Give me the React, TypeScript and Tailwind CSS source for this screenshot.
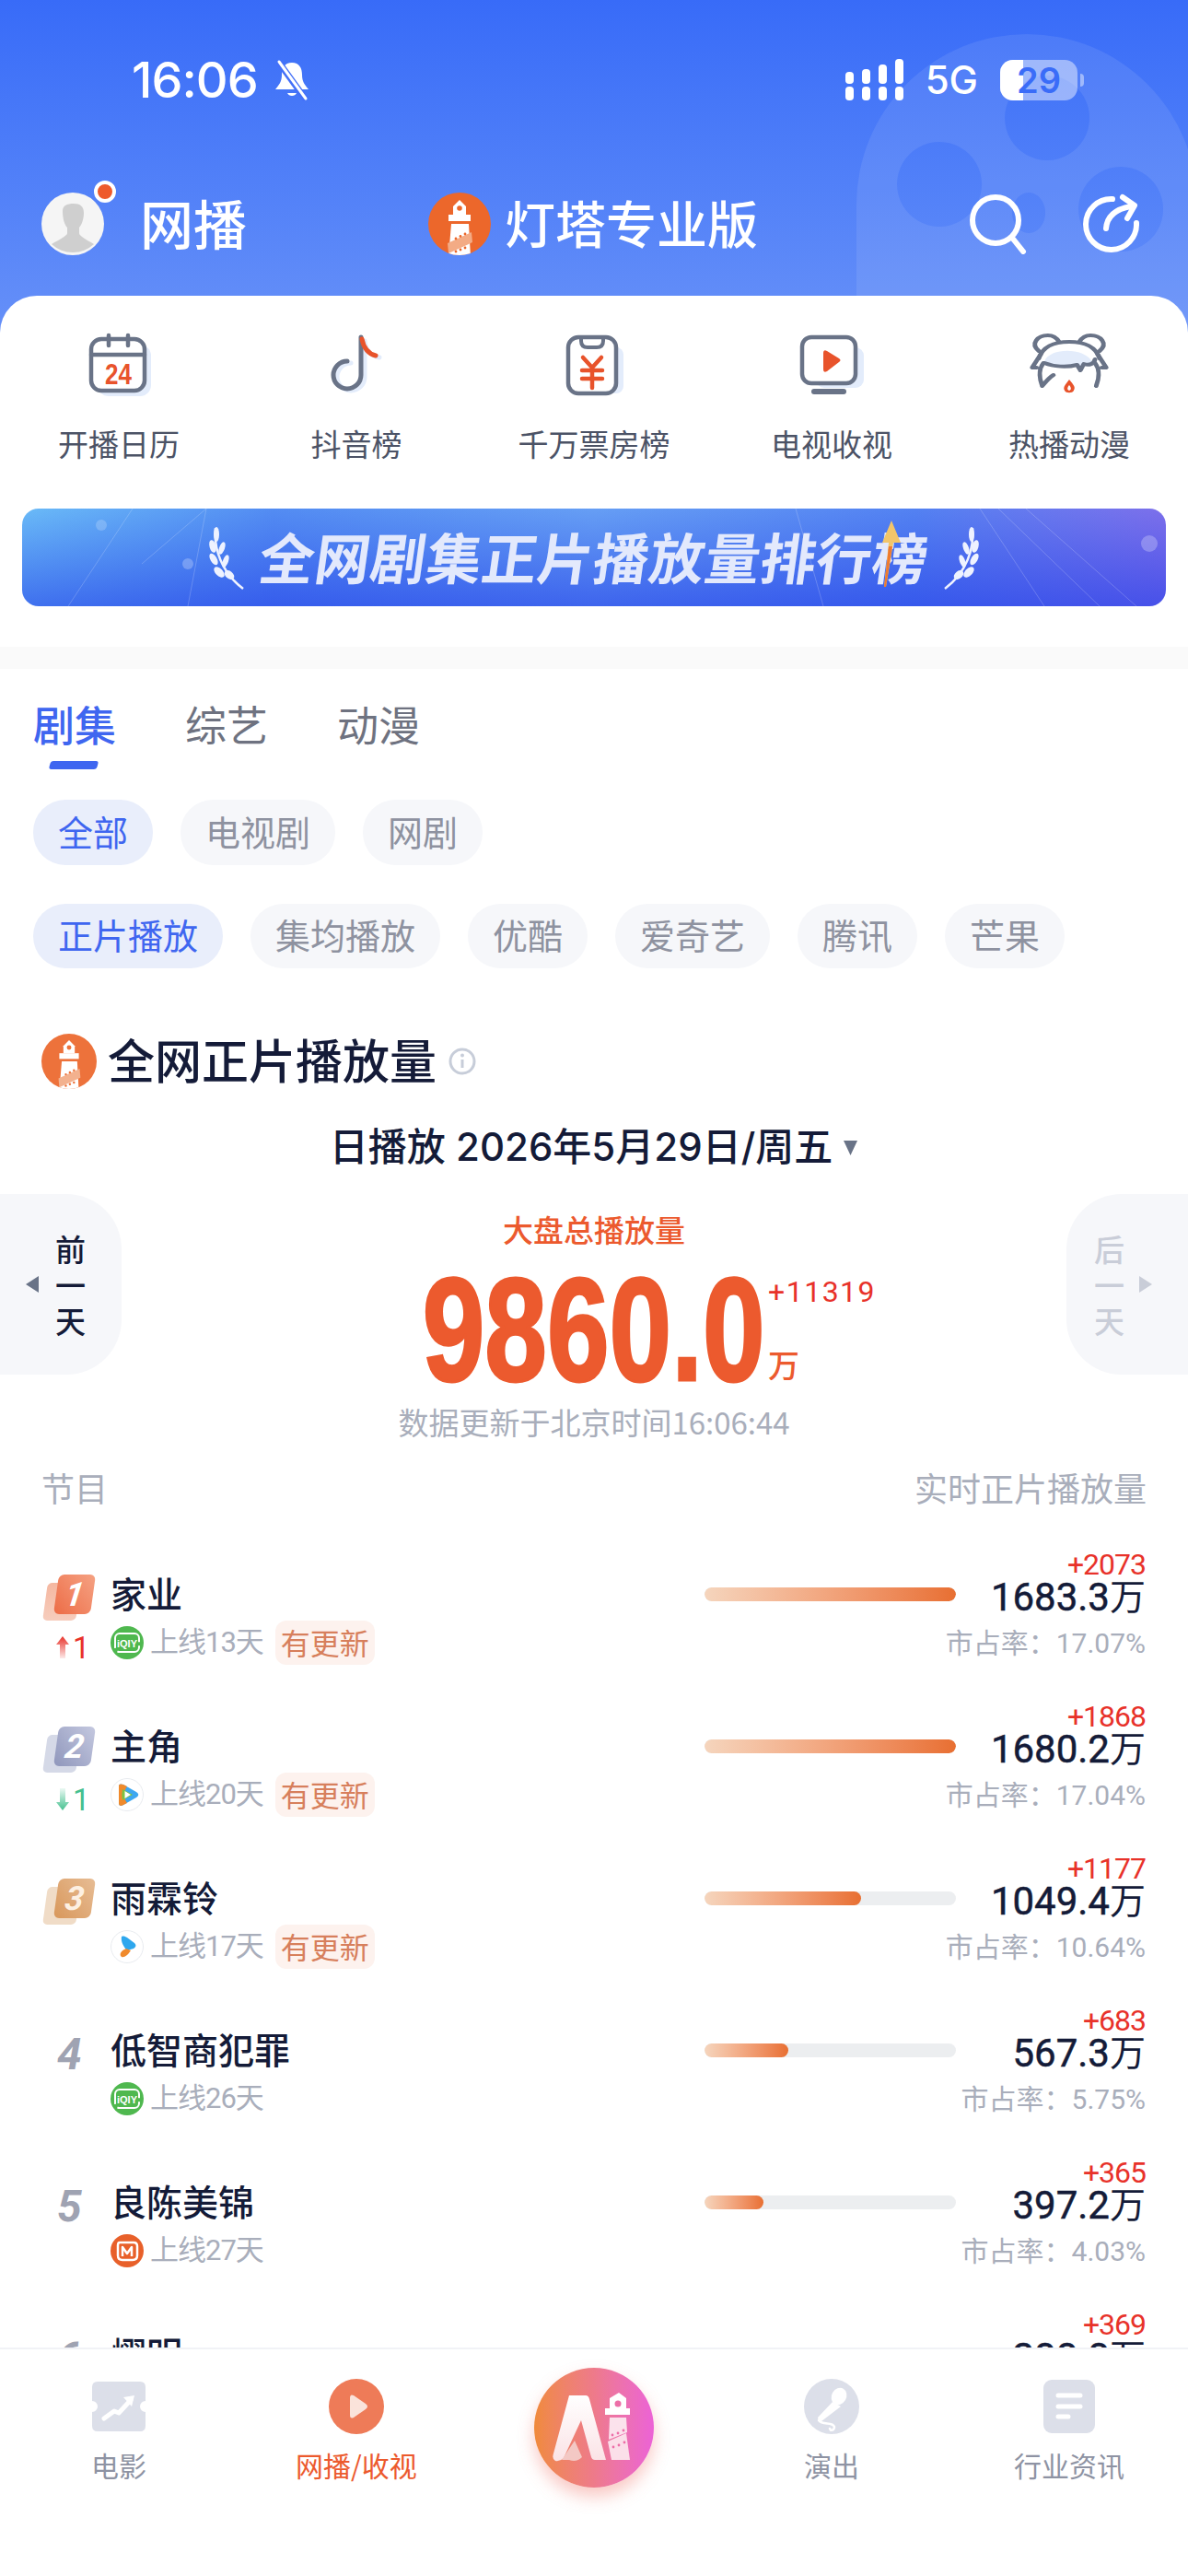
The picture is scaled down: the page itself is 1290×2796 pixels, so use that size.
import React from 'react';

const tabs = ['剧集', '综艺', '动漫'];
const chipsA = ['全部', '电视剧', '网剧'];
const chipsB = ['正片播放', '集均播放', '优酷', '爱奇艺', '腾讯', '芒果'];

type Row = {
  rank: number;
  change?: 'up' | 'down';
  title: string;
  platform: 'iqiyi' | 'tencent' | 'youku' | 'mango';
  online: string;
  updated?: boolean;
  bar: number;
  delta: string;
  value: string;
  share: string;
};

const rows: Row[] = [
  { rank: 1, change: 'up', title: '家业', platform: 'iqiyi', online: '上线13天', updated: true, bar: 100, delta: '+2073', value: '1683.3', share: '17.07%' },
  { rank: 2, change: 'down', title: '主角', platform: 'tencent', online: '上线20天', updated: true, bar: 100, delta: '+1868', value: '1680.2', share: '17.04%' },
  { rank: 3, title: '雨霖铃', platform: 'youku', online: '上线17天', updated: true, bar: 62.3, delta: '+1177', value: '1049.4', share: '10.64%' },
  { rank: 4, title: '低智商犯罪', platform: 'iqiyi', online: '上线26天', bar: 33.5, delta: '+683', value: '567.3', share: '5.75%' },
  { rank: 5, title: '良陈美锦', platform: 'mango', online: '上线27天', bar: 23.3, delta: '+365', value: '397.2', share: '4.03%' },
  { rank: 6, title: '熠明', platform: 'iqiyi', online: '上线27天', bar: 20, delta: '+369', value: '288.8', share: '2.93%' },
];

const Lighthouse = ({ id, size, opacity = 1 }: { id: string; size: number; opacity?: number }) => (
  <svg width={size} height={size} viewBox="0 0 68 68" className="shrink-0" style={{ opacity }}>
    <defs>
      <clipPath id={id}>
        <circle cx="34" cy="34" r="34" />
      </clipPath>
    </defs>
    <circle cx="34" cy="34" r="34" fill="#ec672b" />
    <g clipPath={`url(#${id})`}>
      <path d="M27 24V15L34 8L41 15V24Z" fill="#fff" />
      <circle cx="34" cy="17" r="2.8" fill="#ec672b" />
      <rect x="22" y="24" width="24" height="7" fill="#fff" />
      <path d="M25 34H44L46 70H22Z" fill="#fff" />
      <path d="M21 55L47 43L48 54L22 66Z" fill="#f3ab85" />
      <g fill="#ec672b">
        <circle cx="30" cy="50" r="1.4" />
        <circle cx="35" cy="47.5" r="1.4" />
        <circle cx="40" cy="45" r="1.4" />
        <circle cx="30" cy="64" r="1.4" />
        <circle cx="35" cy="62" r="1.4" />
        <circle cx="40" cy="60" r="1.4" />
      </g>
    </g>
  </svg>
);

const Reel = () => (
  <svg width="380" height="360" viewBox="0 0 380 360" className="absolute left-[930px] top-[37px]">
    <path
      fillRule="evenodd"
      fill="#fff"
      fillOpacity="0.085"
      d="M0 185A185 185 0 1 1 370 185V360H0ZM207 45a46 46 0 1 0 .1 0ZM90 117a46 46 0 1 0 .1 0ZM287 144a46 46 0 1 0 .1 0ZM187 172a18 22 0 1 0 .1 0Z"
    />
  </svg>
);

const StatusBar = () => (
  <div className="relative flex h-[54px] items-center mt-[60px]">
    <span className="ml-[143px] text-[54px] font-medium leading-none text-white [font-family:Inter,sans-serif] tracking-[-1px]">16:06</span>
    <svg width="46" height="46" viewBox="0 0 46 46" className="ml-[14px]" fill="none">
      <path d="M23 4C15 4 12 10 12 17C12 25 9 28 5 33H41C37 28 34 25 34 17C34 10 31 4 23 4Z" fill="#fff" />
      <path d="M18 37a5.5 5 0 0 0 10 0Z" fill="#fff" />
      <path d="M9 4L38 44" stroke="#4470f8" strokeWidth="7" />
      <path d="M9 3L38 43" stroke="#fff" strokeWidth="3" strokeLinecap="round" />
    </svg>
    <div className="ml-auto mr-[113px] flex items-center">
      <svg width="66" height="46" viewBox="0 0 66 46" fill="#fff">
        <rect x="1" y="30" width="9" height="15" rx="4" />
        <rect x="1" y="14" width="9" height="13" rx="4" />
        <rect x="19" y="30" width="9" height="15" rx="4" />
        <rect x="19" y="11" width="9" height="16" rx="4" />
        <rect x="37" y="30" width="9" height="15" rx="4" />
        <rect x="37" y="6" width="9" height="21" rx="4" />
        <rect x="55" y="30" width="9" height="15" rx="4" />
        <rect x="55" y="0" width="9" height="27" rx="4" />
      </svg>
      <span className="ml-[22px] text-[42px] font-medium leading-none text-white [font-family:Inter,sans-serif]">5G</span>
      <div className="relative ml-[24px] flex h-[44px] w-[84px] items-center justify-center overflow-hidden rounded-[14px] bg-white/45">
        <div className="absolute inset-y-0 left-0 w-[25px] bg-white" />
        <span className="relative text-[38px] font-semibold leading-none text-[#3a6cf8] [font-family:Inter,sans-serif]">29</span>
      </div>
      <span className="ml-[3px] h-[14px] w-[4px] rounded-r-full bg-white/45" />
    </div>
  </div>
);

const TopBar = () => (
  <div className="relative mt-[89px] flex h-[80px] items-center">
    <div className="flex w-[465px] items-center pl-[45px]">
      <div className="relative">
        <svg width="68" height="68" viewBox="0 0 68 68" className="block">
          <circle cx="34" cy="34" r="34" fill="#f5f5f5" />
          <path d="M23 20C23 14 28 12 35 12C42 12 46 15 46 22C46 30 43 36 41 38V44C41 47 47 50 57 56A34 34 0 0 1 11 56C21 50 28 47 28 44V38C25 35 23 28 23 20Z" fill="#cfcfcf" />
          <path d="M28 42V48H41V42Z" fill="#cfcfcf" />
        </svg>
        <span className="absolute left-[57px] top-[-13px] h-[24px] w-[24px] rounded-full border-[4px] border-white bg-[#ee5a2c]" />
      </div>
      <span className="ml-[39px] pb-[5px] text-[58px] font-medium leading-none text-white">网播</span>
    </div>
    <Lighthouse id="top-logo" size={68} />
    <span className="ml-[15px] pb-[5px] text-[55px] font-medium leading-none text-white">灯塔专业版</span>
    <div className="ml-auto mr-[50px] flex items-center gap-[60px]">
      <svg width="64" height="66" viewBox="0 0 64 66" fill="none" stroke="#fff" strokeWidth="6" strokeLinecap="round">
        <circle cx="29" cy="29" r="25" />
        <path d="M47 48L59 63" />
      </svg>
      <svg width="64" height="66" viewBox="0 0 64 66" fill="none" stroke="#fff" strokeWidth="6" strokeLinecap="round" strokeLinejoin="round">
        <path d="M58 32A27.5 27.5 0 1 1 32 6" />
        <path d="M25 38C26 25 35 17 52 14" />
        <path d="M43 4L56 13L48 27" />
      </svg>
    </div>
  </div>
);

const shadow = '#e3ecfb';
const line = '#697387';
const hot = '#e8532b';

const CalendarIcon = () => (
  <svg width="78" height="78" viewBox="0 0 78 78" fill="none">
    <rect x="16" y="17" width="58" height="56" rx="12" fill={shadow} />
    <rect x="9" y="11" width="58" height="56" rx="11" fill="#fff" stroke={line} strokeWidth="4.5" />
    <path d="M9 28H67M28 7V18M49 7V18" stroke={line} strokeWidth="4.5" strokeLinecap="round" />
    <text x="24" y="60" textLength="29" lengthAdjust="spacingAndGlyphs" fontSize="31" fontWeight="800" fill={hot} fontFamily="Liberation Sans, sans-serif">24</text>
  </svg>
);

const NoteIcon = () => (
  <svg width="78" height="78" viewBox="0 0 78 78" fill="none" strokeLinecap="round">
    <path d="M48 13V52A15 15 0 1 1 33 37" stroke={shadow} strokeWidth="5" />
    <path d="M64 31C56 30 50 24 48 15" stroke={shadow} strokeWidth="5" />
    <path d="M44 9V50A15 15 0 1 1 29 35" stroke={line} strokeWidth="5" />
    <path d="M45 11C47 21 52 27 60 29" stroke={hot} strokeWidth="5" />
  </svg>
);

const TicketIcon = () => (
  <svg width="78" height="78" viewBox="0 0 78 78" fill="none">
    <rect x="24" y="20" width="47" height="50" rx="8" fill={shadow} />
    <rect x="11" y="9" width="52" height="61" rx="11" fill="#fff" stroke={line} strokeWidth="4.5" />
    <path d="M25 9V13Q25 20 32 20H42Q49 20 49 13V9" stroke={line} strokeWidth="4" />
    <path d="M27 31L37 42L47 31M26 45H48M26 54H48M37 42V64" stroke={hot} strokeWidth="4.5" strokeLinecap="round" strokeLinejoin="round" />
  </svg>
);

const TvIcon = () => (
  <svg width="78" height="78" viewBox="0 0 78 78" fill="none">
    <rect x="22" y="20" width="52" height="44" rx="9" fill={shadow} />
    <rect x="7" y="9" width="58" height="50" rx="10" fill="#fff" stroke={line} strokeWidth="4.5" />
    <path d="M20 68H52" stroke={line} strokeWidth="6" strokeLinecap="round" />
    <path d="M30 26Q30 22 34 24L47 32Q50 34 47 36L34 46Q30 48 30 44Z" fill={hot} />
  </svg>
);

const AnimeIcon = () => (
  <svg width="78" height="78" viewBox="0 0 78 78" fill="none" className="overflow-visible" stroke={line} strokeWidth="4" strokeLinecap="round" strokeLinejoin="round">
    <g transform="translate(39 0) scale(1.22 1) translate(-39 0)">
      <path d="M17 35C22 20 52 20 59 35C58 40 56 42 52 39L49 44L45 39C38 41 28 40 21 38Z" fill={shadow} stroke="none" />
      <path d="M12 24C4 16 11 7 20 7C25 7 28 10 30 14M66 24C74 16 67 7 58 7C53 7 50 10 48 14" />
      <path d="M12 32C15 20 25 14 39 14C53 14 63 20 66 32" />
      <path d="M17 37C25 41 37 42 46 39L49 45L52 38C57 40 61 38 62 33" />
      <path d="M14 27L6 42L10 42M16 37C11 45 13 56 15 62C19 56 22 52 25 50" />
      <path d="M64 27L72 42L68 42M62 37C67 45 65 56 63 62" />
      <path d="M39 55C43 61 45 63 43 67C42 70 36 70 35 67C33 63 36 60 39 55Z" fill={hot} stroke="none" />
      <path d="M39 61C41 64 41 66 39 67C37 66 37 64 39 61Z" fill="#fff" stroke="none" />
    </g>
  </svg>
);

const quickItems = [
  { label: '开播日历', icon: <CalendarIcon /> },
  { label: '抖音榜', icon: <NoteIcon /> },
  { label: '千万票房榜', icon: <TicketIcon /> },
  { label: '电视收视', icon: <TvIcon /> },
  { label: '热播动漫', icon: <AnimeIcon /> },
];

const Laurel = ({ flip }: { flip?: boolean }) => (
  <svg width="46" height="72" viewBox="0 0 46 72" fill="#eef2ff" className={flip ? '-scale-x-100' : ''}>
    <path d="M10 4C8 26 16 52 40 70" fill="none" stroke="#eef2ff" strokeWidth="2.5" />
    <ellipse cx="11" cy="11" rx="3" ry="8" />
    <ellipse cx="7" cy="24" rx="3.5" ry="7" transform="rotate(-15 7 24)" />
    <ellipse cx="17" cy="26" rx="3" ry="7" transform="rotate(20 17 26)" />
    <ellipse cx="8" cy="38" rx="3.5" ry="7" transform="rotate(-30 8 38)" />
    <ellipse cx="21" cy="40" rx="3" ry="7" transform="rotate(20 21 40)" />
    <ellipse cx="14" cy="52" rx="4" ry="7" transform="rotate(-45 14 52)" />
    <ellipse cx="25" cy="55" rx="4" ry="6" transform="rotate(-50 25 55)" />
  </svg>
);

const Banner = () => (
  <div className="relative mx-[24px] mt-[49px] flex h-[106px] items-center justify-center gap-[12px] overflow-hidden rounded-[18px] bg-[linear-gradient(180deg,rgba(130,180,250,0.3),rgba(50,80,235,0.7)),linear-gradient(90deg,#5fbdf6_0%,#3f7bef_22%,#5a95f2_50%,#3f6cee_78%,#7a52e4_100%)]">
    <svg width="1242" height="106" viewBox="0 0 1242 106" className="absolute inset-0" fill="none" stroke="#fff" strokeOpacity="0.2">
      <path d="M50 106L120 0M180 106L200 0M130 60L200 0M1040 0L1110 106M1060 0L1170 106M1090 0L1210 106M840 0L870 106" />
      <circle cx="180" cy="60" r="6" fill="#fff" fillOpacity="0.25" stroke="none" />
      <circle cx="1224" cy="38" r="9" fill="#fff" fillOpacity="0.25" stroke="none" />
      <circle cx="86" cy="18" r="6" fill="#fff" fillOpacity="0.2" stroke="none" />
    </svg>
    <Laurel />
    <span className="relative inline-block -skew-x-[8deg] pb-[4px] text-[60px] font-bold leading-none tracking-[0.5px] text-[#e3e9fc]">全网剧集正片播放量排行榜</span>
    <Laurel flip />
    <svg width="24" height="72" viewBox="0 0 24 72" className="absolute left-[932px] top-[13px]">
      <path d="M12 0L22 24H14L6 72H4L9 24H2Z" fill="#f2c56a" />
      <path d="M9 28H13L6 72H4Z" fill="#ee7a30" />
    </svg>
  </div>
);

const Chip = ({ label, active, h }: { label: string; active?: boolean; h: string }) => (
  <span className={`flex items-center rounded-[35px] px-[27px] pb-[4px] text-[38px] leading-none ${h} ${active ? 'bg-[#e9eefb] text-[#3f66f0]' : 'bg-[#f6f7fa] text-[#8e92a0]'}`}>{label}</span>
);

const DayButton = ({ next }: { next?: boolean }) => (
  <div className={`flex h-[196px] w-[132px] shrink-0 items-center bg-[#f6f7fa] ${next ? 'rounded-l-[60px] pl-[30px]' : 'rounded-r-[60px] pl-[27px]'}`}>
    {!next && (
      <svg width="16" height="18" viewBox="0 0 16 18"><path d="M15 0V18L1 9Z" fill="#697387" /></svg>
    )}
    <div className={`flex flex-col gap-[6px] text-[33px] font-medium leading-none ${next ? 'text-[#c9cdd8]' : 'ml-[17px] text-[#141b38]'}`}>
      <span>{next ? '后' : '前'}</span>
      <span>一</span>
      <span>天</span>
    </div>
    {next && (
      <svg width="16" height="18" viewBox="0 0 16 18" className="ml-[15px]"><path d="M1 0V18L15 9Z" fill="#c9cdd8" /></svg>
    )}
  </div>
);

const badgeStyles: Record<number, { front: string; back: string; text: string }> = {
  1: { front: 'bg-linear-to-tr from-[#ec6b45] to-[#f5a283]', back: 'bg-linear-to-b from-[#f5b7a0] to-[#f6cdbd]', text: 'text-white' },
  2: { front: 'bg-linear-to-tr from-[#8f96bb] to-[#c5c9e0]', back: 'bg-[#d5d9e7]', text: 'text-white' },
  3: { front: 'bg-linear-to-tr from-[#d8975a] to-[#e7bd95]', back: 'bg-[#f0dcc7]', text: 'text-[#fdf0e2]' },
};

const RankBadge = ({ rank }: { rank: number }) => {
  const s = badgeStyles[rank];
  if (!s) {
    return <span className="ml-[16px] mt-[2px] block text-[48px] font-bold italic leading-none text-[#9fa3b2] [font-family:Roboto,sans-serif]">{rank}</span>;
  }
  return (
    <div className="relative h-[50px] w-[58px]">
      <div className={`absolute bottom-0 left-[3px] h-[41px] w-[36px] -skew-x-[8deg] rounded-[5px] ${s.back}`} />
      <div className={`absolute right-[3px] top-0 flex h-[43px] w-[40px] -skew-x-[8deg] items-center justify-center rounded-[6px] ${s.front}`}>
        <span className={`text-[36px] font-bold italic leading-none [font-family:Roboto,sans-serif] ${s.text}`}>{rank}</span>
      </div>
    </div>
  );
};

const ChangeMark = ({ dir, id }: { dir: 'up' | 'down'; id: string }) => {
  const color = dir === 'up' ? '#e8322a' : '#45c08f';
  return (
    <div className="ml-[14px] mt-[17px] flex h-[24px] items-center">
      <svg width="16" height="24" viewBox="0 0 16 24">
        <defs>
          <linearGradient id={id} x1="0" y1={dir === 'up' ? 0 : 1} x2="0" y2={dir === 'up' ? 1 : 0}>
            <stop offset="0" stopColor={color} />
            <stop offset="1" stopColor={color} stopOpacity="0.1" />
          </linearGradient>
        </defs>
        <path d={dir === 'up' ? 'M8 0L15 9H11V24H5V9H1Z' : 'M8 24L15 15H11V0H5V15H1Z'} fill={`url(#${id})`} />
      </svg>
      <span className="ml-[3px] text-[33px] leading-none [font-family:Roboto,sans-serif]" style={{ color }}>1</span>
    </div>
  );
};

const PlatformIcon = ({ kind }: { kind: Row['platform'] }) => {
  if (kind === 'iqiyi') {
    return (
      <svg width="36" height="36" viewBox="0 0 36 36" className="shrink-0">
        <circle cx="18" cy="18" r="18" fill="#4fb84f" />
        <rect x="5" y="8" width="26" height="20" rx="5" fill="none" stroke="#fff" strokeWidth="2" strokeDasharray="28 4" />
        <text x="18" y="23" textAnchor="middle" fontSize="11" fontWeight="700" fill="#fff" fontFamily="Liberation Sans, sans-serif">iQIY</text>
      </svg>
    );
  }
  if (kind === 'tencent') {
    return (
      <svg width="36" height="36" viewBox="0 0 36 36" className="shrink-0">
        <circle cx="18" cy="18" r="17.5" fill="#fff" stroke="#e8ebef" />
        <path d="M9 9C9 6 11 6 14 7L28 15C31 17 31 19 28 21L14 29C11 31 9 30 9 27Z" fill="#3da7f0" />
        <path d="M9 9C9 6 11 6 14 7L18 9C14 14 14 22 18 27L14 29C11 31 9 30 9 27Z" fill="#f08a2c" />
        <path d="M13 12L24 18L13 24Q11.5 18 13 12Z" fill="#7cc242" />
        <path d="M15.5 14L22 18L15.5 22Z" fill="#fff" />
      </svg>
    );
  }
  if (kind === 'youku') {
    return (
      <svg width="36" height="36" viewBox="0 0 36 36" className="shrink-0">
        <circle cx="18" cy="18" r="17.5" fill="#fff" stroke="#e8ebef" />
        <path d="M12 7C14 6 16 7 18 8L26 14C28 16 28 18 25 20L18 22C14 18 11 12 12 7Z" fill="#2ea7ee" />
        <path d="M17 20L22 22C19 27 15 30 12 29C9 27 11 22 17 20Z" fill="#f08a2c" />
      </svg>
    );
  }
  return (
    <svg width="36" height="36" viewBox="0 0 36 36" className="shrink-0">
      <circle cx="18" cy="18" r="18" fill="#e8602a" />
      <path d="M10 9H25Q29 9 29 13V23Q29 28 24 28H13Q8 28 8 23V12Q8 9 10 9Z" fill="none" stroke="#fff" strokeWidth="2.5" />
      <path d="M13 24V14L18 21L23 14V24" fill="none" stroke="#fff" strokeWidth="2.5" strokeLinejoin="round" />
    </svg>
  );
};

const ListRow = ({ row }: { row: Row }) => (
  <div className="flex h-[165px]">
    <div className="flex w-[765px] pt-[31px]">
      <div className="ml-[46px] w-[74px] shrink-0">
        <RankBadge rank={row.rank} />
        {row.change && <ChangeMark dir={row.change} id={`chg-${row.rank}`} />}
      </div>
      <div className="min-w-0 -mt-[2px]">
        <div className="flex h-[46px] items-center pb-[3px] text-[39px] font-medium leading-none text-[#141b38]">{row.title}</div>
        <div className="mt-[6px] flex h-[48px] items-center">
          <PlatformIcon kind={row.platform} />
          <span className="ml-[7px] whitespace-nowrap pb-[2px] text-[31px] leading-none tracking-[-1px] text-[#a9aebb] [font-family:Roboto,'Noto_Sans_CJK_SC',sans-serif]">{row.online}</span>
          {row.updated && (
            <span className="ml-[13px] flex h-[48px] items-center rounded-[12px] bg-[#fdf2ee] px-[6px] pb-[2px] text-[32px] leading-none text-[#d77f5c]">有更新</span>
          )}
        </div>
      </div>
    </div>
    <div className="mt-[45px] h-[15px] w-[273px] overflow-hidden rounded-full bg-[#eceef0]">
      <div className="h-full rounded-full bg-linear-to-r from-[#f5d5bd] to-[#e86f31]" style={{ width: `${row.bar}%` }} />
    </div>
    <div className="flex min-w-0 flex-1 flex-col items-end whitespace-nowrap pr-[46px]">
      <span className="mt-[2px] flex h-[36px] items-center text-[32px] leading-none tracking-[-1px] text-[#e8322a] [font-family:Roboto,sans-serif]">{row.delta}</span>
      <span className="flex h-[36px] items-center text-[42px] font-normal leading-none text-[#141b38] [-webkit-text-stroke:0.5px_#141b38] [font-family:Roboto,'Noto_Sans_CJK_SC',sans-serif]">
        {row.value}<span className="text-[39px] [-webkit-text-stroke:0px]">万</span>
      </span>
      <span className="mt-[13px] flex h-[40px] items-center pb-[2px] text-[30px] leading-none text-[#a9aebb] [font-family:Roboto,'Noto_Sans_CJK_SC',sans-serif]">市占率：{row.share}</span>
    </div>
  </div>
);

const TicketNav = () => (
  <svg width="60" height="60" viewBox="0 0 60 60">
    <path d="M7 3H53Q59 3 59 9V24A6 6 0 0 0 59 36V51Q59 57 53 57H7Q1 57 1 51V36A6 6 0 0 0 1 24V9Q1 3 7 3Z" fill="#dcdfe9" />
    <path d="M14 43L25 35L30 37L43 23" fill="none" stroke="#fff" strokeWidth="5" strokeLinecap="round" strokeLinejoin="round" />
    <path d="M35 20L47 18L44 30" fill="#fff" />
  </svg>
);

const PlayNav = () => (
  <svg width="60" height="60" viewBox="0 0 60 60">
    <circle cx="30" cy="30" r="30" fill="#ee7b58" />
    <path d="M23 21Q23 16 27 18L40 27Q44 30 40 33L27 42Q23 44 23 39Z" fill="#fae3da" />
  </svg>
);

const MicNav = () => (
  <svg width="60" height="60" viewBox="0 0 60 60">
    <circle cx="30" cy="30" r="30" fill="#dcdfe9" />
    <ellipse cx="38" cy="19" rx="8" ry="9.5" fill="#fff" transform="rotate(30 38 19)" />
    <path d="M31 25L40 30L19 46Q15 45 15 42Z" fill="#fff" />
    <path d="M16 45C20 51 31 46 33 52C33 56 29 57 28 54" fill="none" stroke="#fff" strokeWidth="2.5" strokeLinecap="round" />
  </svg>
);

const NewsNav = () => (
  <svg width="60" height="60" viewBox="0 0 60 60">
    <rect x="2" y="1" width="56" height="58" rx="9" fill="#dcdfe9" />
    <path d="M18 18H42M18 30H42M18 41H29" stroke="#fff" strokeWidth="5" strokeLinecap="round" />
  </svg>
);

const AiButton = () => (
  <div className="mx-auto mt-[20px] flex h-[130px] w-[130px] items-center justify-center rounded-full bg-linear-to-r from-[#f08a3a] via-[#ee7a8a] to-[#ec62d6] shadow-[0_10px_18px_rgba(238,100,90,0.35)]">
    <svg width="90" height="76" viewBox="0 0 90 76">
      <defs>
        <linearGradient id="ai-a" x1="0" y1="0" x2="0" y2="1">
          <stop offset="0" stopColor="#fff" />
          <stop offset="1" stopColor="#fbe3e6" />
        </linearGradient>
      </defs>
      <path d="M18 3H36Q39 3 40 7L58 73H46Q43 73 42 70L31 30L12 71Q8 75 3 74Q-1 72 1 66Z" fill="url(#ai-a)" />
      <path d="M24 52L32 70Q26 76 18 73L10 73Z" fill="#f3c8c4" />
      <path d="M72 0L80 6V17H84V24H57V17H62V6Z" fill="#fff" />
      <circle cx="71" cy="12" r="3.5" fill="#ec6fa8" />
      <path d="M62 27H80L81 43L61 51Z" fill="#fbe2ec" />
      <path d="M60 53L80 44L84 73H64Z" fill="#fbdfe9" />
      <g fill="#ec6fa8">
        <circle cx="65" cy="46" r="1.4" />
        <circle cx="71" cy="44" r="1.4" />
        <circle cx="77" cy="41" r="1.4" />
        <circle cx="66" cy="59" r="1.4" />
        <circle cx="72" cy="57" r="1.4" />
        <circle cx="78" cy="54" r="1.4" />
      </g>
    </svg>
  </div>
);

const navItems = [
  { label: '电影', icon: <TicketNav /> },
  { label: '网播/收视', icon: <PlayNav />, active: true },
  { label: '', icon: null },
  { label: '演出', icon: <MicNav /> },
  { label: '行业资讯', icon: <NewsNav /> },
];

export default function App() {
  return (
    <div className="flex h-[2796px] w-[1290px] flex-col overflow-hidden bg-white [font-family:'Noto_Sans_CJK_SC',sans-serif]">
      <div className="relative h-[361px] shrink-0 overflow-hidden bg-linear-to-b from-[#386bf8] to-[#6690f8] pt-px">
        <Reel />
        <div className="-mt-px">
          <StatusBar />
          <TopBar />
        </div>
      </div>

      <main className="relative -mt-[40px] min-h-0 flex-1 overflow-hidden rounded-t-[40px] bg-white">
        <div className="grid grid-cols-5 pt-[36px]">
          {quickItems.map(item => (
            <div key={item.label} className="flex flex-col items-center">
              {item.icon}
              <span className="mt-[28px] flex h-[40px] items-center pb-[3px] text-[33px] leading-none text-[#4c5366]">{item.label}</span>
            </div>
          ))}
        </div>
        <Banner />
        <div className="mt-[44px] h-[24px] bg-[#fafafa]" />

        <div className="px-[36px]">
          <div className="flex gap-[75px] pt-[32px]">
            {tabs.map((tab, i) => (
              <div key={tab}>
                <div className={`flex h-[60px] items-center pb-[5px] text-[45px] leading-none ${i === 0 ? 'font-medium text-[#3f66f0]' : 'text-[#6e7280]'}`}>{tab}</div>
                {i === 0 && <div className="ml-[18px] mt-[8px] h-[9px] w-[52px] -skew-x-[15deg] rounded-[3px] bg-[#3f66f0]" />}
              </div>
            ))}
          </div>
          <div className="mt-[33px] flex gap-[30px]">
            {chipsA.map((c, i) => <Chip key={c} label={c} active={i === 0} h="h-[71px]" />)}
          </div>
          <div className="mt-[42px] flex gap-[30px]">
            {chipsB.map((c, i) => <Chip key={c} label={c} active={i === 0} h="h-[70px]" />)}
          </div>
        </div>

        <div className="mt-[71px] flex h-[60px] items-center pl-[45px]">
          <Lighthouse id="title-logo" size={60} opacity={0.92} />
          <span className="ml-[12px] pb-[5px] text-[51px] font-medium leading-none text-[#141b38]">全网正片播放量</span>
          <svg width="30" height="30" viewBox="0 0 30 30" className="ml-[13px]" fill="none">
            <circle cx="15" cy="15" r="13" stroke="#c7cdd9" strokeWidth="3" />
            <path d="M15 13V22" stroke="#c7cdd9" strokeWidth="3" />
            <circle cx="15" cy="8.5" r="2" fill="#c7cdd9" />
          </svg>
        </div>

        <div className="mt-[39px] flex h-[50px] items-center justify-center">
          <span className="pb-[2px] text-[42px] font-medium leading-none text-[#141b38] [font-family:Inter,'Noto_Sans_CJK_SC',sans-serif]">日播放 2026年5月29日/周五</span>
          <svg width="17" height="18" viewBox="0 0 17 18" className="ml-[11px]"><path d="M1 1H16L8.5 17Z" fill="#697387" /></svg>
        </div>

        <div className="mt-[25px] flex items-start">
          <DayButton />
          <div className="flex min-w-0 flex-1 flex-col items-center pt-[20px]">
            <div className="flex h-[40px] items-center pb-[3px] text-[33px] font-medium leading-none text-[#ec5a2e]">大盘总播放量</div>
            <div className="mt-[22px] grid h-[130px] w-full grid-cols-[1fr_368px_1fr] grid-rows-[130px]">
              <div />
              <div className="flex h-[130px] items-center justify-center">
                <span className="shrink-0 scale-x-[0.76] text-[160px] font-bold leading-none text-[#ec5a2e] [-webkit-text-stroke:3px_#ec5a2e] [font-family:'Liberation_Sans',sans-serif]">9860.0</span>
              </div>
              <div className="flex h-[130px] flex-col pb-[10px] pl-[5px] pt-[8px]">
                <span className="text-[32px] leading-none tracking-[1.5px] text-[#e8322a] [font-family:Roboto,sans-serif]">+11319</span>
                <span className="mt-auto text-[34px] font-medium leading-none text-[#ec5a2e]">万</span>
              </div>
            </div>
            <div className="mt-[17px] flex h-[40px] items-center whitespace-nowrap pb-[3px] text-[33px] leading-none text-[#a9aebb]">数据更新于北京时间16:06:44</div>
          </div>
          <DayButton next />
        </div>

        <div className="mt-[28px] flex h-[44px] items-center justify-between px-[45px] pb-[3px] text-[36px] leading-none text-[#a9aebb]">
          <span>节目</span>
          <span>实时正片播放量</span>
        </div>

        <div className="mt-[41px]">
          {rows.map(row => <ListRow key={row.rank} row={row} />)}
        </div>
      </main>

      <footer className="grid h-[248px] shrink-0 grid-cols-5 border-t-2 border-[#f1f2f6] bg-white">
        {navItems.map((item, i) =>
          i === 2 ? (
            <div key="ai"><AiButton /></div>
          ) : (
            <div key={item.label} className="flex flex-col items-center pt-[32px]">
              {item.icon}
              <span className={`mt-[14px] flex h-[40px] items-center pb-[3px] text-[30px] leading-none ${item.active ? 'text-[#ec5a2e]' : 'text-[#8e93a3]'}`}>{item.label}</span>
            </div>
          ),
        )}
      </footer>
    </div>
  );
}
